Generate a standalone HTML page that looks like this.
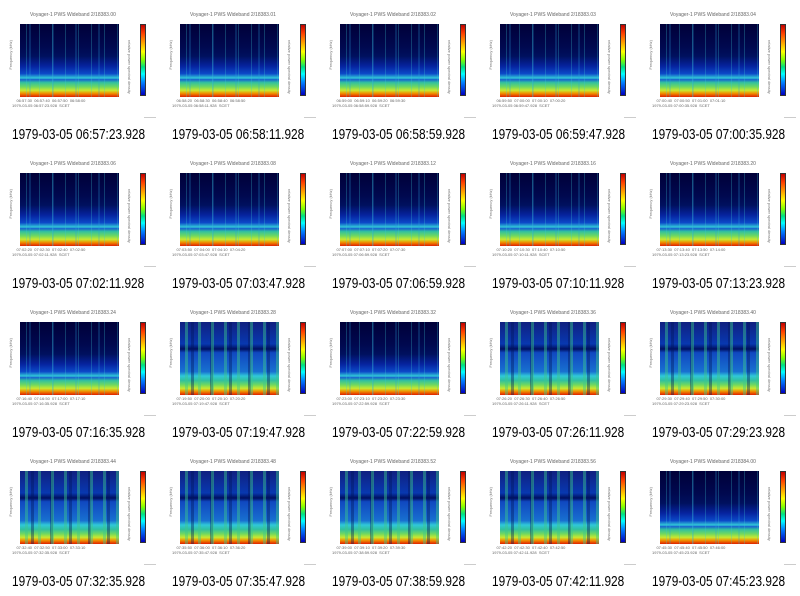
<!DOCTYPE html>
<html><head><meta charset="utf-8"><style>
*{margin:0;padding:0;box-sizing:border-box}
html,body{width:800px;height:596px;background:#fff;overflow:hidden;position:relative;font-family:"Liberation Sans",sans-serif}
.c{position:absolute;width:160px;height:149px;overflow:hidden}
.t{position:absolute;left:30px;top:12px;font-size:5px;color:#666;white-space:nowrap}
.p{position:absolute;left:20px;top:24px;width:99px;height:73px;
background:
repeating-linear-gradient(90deg,rgba(0,0,0,0) 0 6px,rgba(60,200,210,.28) 6px 7px,rgba(0,0,0,0) 7px 13px),
repeating-linear-gradient(90deg,rgba(0,0,0,0) 0 9px,rgba(40,160,220,.22) 9px 11px,rgba(0,0,0,0) 11px 23px),
linear-gradient(180deg,#000038 0%,#00084e 30%,#00105e 44%,#0624a0 58%,#0c48c8 68%,#30c8d8 74%,#1860d0 76%,#30c0a0 80%,#70d860 86%,#c8e830 91%,#f09000 95%,#e02000 100%)}
.p.b{background:
repeating-linear-gradient(90deg,rgba(0,0,0,0) 0 5px,rgba(60,200,140,.45) 5px 8px,rgba(0,0,0,0) 8px 13px),
repeating-linear-gradient(90deg,rgba(0,0,0,0) 0 11px,rgba(0,20,90,.4) 11px 14px,rgba(0,0,0,0) 14px 19px),
linear-gradient(180deg,#102080 0%,#0838b0 30%,#001060 37%,#1048c0 42%,#1870d0 68%,#30c8d8 74%,#30c0a0 80%,#70d860 86%,#c8e830 91%,#f09000 95%,#e02000 100%)}
.yl{position:absolute;left:8px;top:40px;font-size:4px;color:#777;writing-mode:vertical-rl;transform:rotate(180deg)}
.ax{position:absolute;left:12px;top:98px;font-size:4px;color:#666;white-space:nowrap;line-height:5px}
.cb{position:absolute;left:140px;top:24px;width:6px;height:72px;border:1px solid #333;
background:linear-gradient(180deg,#c00000,#ff4000 12%,#ffa000 25%,#ffff00 38%,#80ff00 50%,#00e080 60%,#00ffff 70%,#0080ff 82%,#0000c0 100%)}
.cl{position:absolute;left:127px;top:40px;font-size:4px;color:#777;writing-mode:vertical-rl}
.sm{position:absolute;left:144px;top:117px;width:12px;height:1px;background:#ccc}
.cap{position:absolute;left:12px;top:125px;font-size:15px;color:#000;white-space:nowrap;transform:scaleX(.79);transform-origin:0 0;line-height:20px}
</style></head><body>

<div class="c" style="left:0;top:0"><div class="t">Voyager-1 PWS Wideband 2/18383.00</div><div class="yl">Frequency (kHz)</div><div class="p"></div><div class="cl">relative power spectral density</div><div class="cb"></div><div class="ax">&nbsp;&nbsp;&nbsp;&nbsp;06:57:30 &nbsp;06:57:40 &nbsp;06:57:50 &nbsp;06:58:00<br>1979-03-05 06:57:23.928 &nbsp;SCET</div><div class="sm"></div><div class="cap">1979-03-05 06:57:23.928</div></div>
<div class="c" style="left:160px;top:0"><div class="t">Voyager-1 PWS Wideband 2/18383.01</div><div class="yl">Frequency (kHz)</div><div class="p"></div><div class="cl">relative power spectral density</div><div class="cb"></div><div class="ax">&nbsp;&nbsp;&nbsp;&nbsp;06:58:20 &nbsp;06:58:30 &nbsp;06:58:40 &nbsp;06:58:50<br>1979-03-05 06:58:11.928 &nbsp;SCET</div><div class="sm"></div><div class="cap">1979-03-05 06:58:11.928</div></div>
<div class="c" style="left:320px;top:0"><div class="t">Voyager-1 PWS Wideband 2/18383.02</div><div class="yl">Frequency (kHz)</div><div class="p"></div><div class="cl">relative power spectral density</div><div class="cb"></div><div class="ax">&nbsp;&nbsp;&nbsp;&nbsp;06:59:00 &nbsp;06:59:10 &nbsp;06:59:20 &nbsp;06:59:30<br>1979-03-05 06:58:59.928 &nbsp;SCET</div><div class="sm"></div><div class="cap">1979-03-05 06:58:59.928</div></div>
<div class="c" style="left:480px;top:0"><div class="t">Voyager-1 PWS Wideband 2/18383.03</div><div class="yl">Frequency (kHz)</div><div class="p"></div><div class="cl">relative power spectral density</div><div class="cb"></div><div class="ax">&nbsp;&nbsp;&nbsp;&nbsp;06:59:50 &nbsp;07:00:00 &nbsp;07:00:10 &nbsp;07:00:20<br>1979-03-05 06:59:47.928 &nbsp;SCET</div><div class="sm"></div><div class="cap">1979-03-05 06:59:47.928</div></div>
<div class="c" style="left:640px;top:0"><div class="t">Voyager-1 PWS Wideband 2/18383.04</div><div class="yl">Frequency (kHz)</div><div class="p"></div><div class="cl">relative power spectral density</div><div class="cb"></div><div class="ax">&nbsp;&nbsp;&nbsp;&nbsp;07:00:40 &nbsp;07:00:50 &nbsp;07:01:00 &nbsp;07:01:10<br>1979-03-05 07:00:35.928 &nbsp;SCET</div><div class="sm"></div><div class="cap">1979-03-05 07:00:35.928</div></div>

<div class="c" style="left:0;top:149px"><div class="t">Voyager-1 PWS Wideband 2/18383.06</div><div class="yl">Frequency (kHz)</div><div class="p"></div><div class="cl">relative power spectral density</div><div class="cb"></div><div class="ax">&nbsp;&nbsp;&nbsp;&nbsp;07:02:20 &nbsp;07:02:30 &nbsp;07:02:40 &nbsp;07:02:50<br>1979-03-05 07:02:11.928 &nbsp;SCET</div><div class="sm"></div><div class="cap">1979-03-05 07:02:11.928</div></div>
<div class="c" style="left:160px;top:149px"><div class="t">Voyager-1 PWS Wideband 2/18383.08</div><div class="yl">Frequency (kHz)</div><div class="p"></div><div class="cl">relative power spectral density</div><div class="cb"></div><div class="ax">&nbsp;&nbsp;&nbsp;&nbsp;07:03:50 &nbsp;07:04:00 &nbsp;07:04:10 &nbsp;07:04:20<br>1979-03-05 07:03:47.928 &nbsp;SCET</div><div class="sm"></div><div class="cap">1979-03-05 07:03:47.928</div></div>
<div class="c" style="left:320px;top:149px"><div class="t">Voyager-1 PWS Wideband 2/18383.12</div><div class="yl">Frequency (kHz)</div><div class="p"></div><div class="cl">relative power spectral density</div><div class="cb"></div><div class="ax">&nbsp;&nbsp;&nbsp;&nbsp;07:07:00 &nbsp;07:07:10 &nbsp;07:07:20 &nbsp;07:07:30<br>1979-03-05 07:06:59.928 &nbsp;SCET</div><div class="sm"></div><div class="cap">1979-03-05 07:06:59.928</div></div>
<div class="c" style="left:480px;top:149px"><div class="t">Voyager-1 PWS Wideband 2/18383.16</div><div class="yl">Frequency (kHz)</div><div class="p"></div><div class="cl">relative power spectral density</div><div class="cb"></div><div class="ax">&nbsp;&nbsp;&nbsp;&nbsp;07:10:20 &nbsp;07:10:30 &nbsp;07:10:40 &nbsp;07:10:50<br>1979-03-05 07:10:11.928 &nbsp;SCET</div><div class="sm"></div><div class="cap">1979-03-05 07:10:11.928</div></div>
<div class="c" style="left:640px;top:149px"><div class="t">Voyager-1 PWS Wideband 2/18383.20</div><div class="yl">Frequency (kHz)</div><div class="p"></div><div class="cl">relative power spectral density</div><div class="cb"></div><div class="ax">&nbsp;&nbsp;&nbsp;&nbsp;07:13:30 &nbsp;07:13:40 &nbsp;07:13:50 &nbsp;07:14:00<br>1979-03-05 07:13:23.928 &nbsp;SCET</div><div class="sm"></div><div class="cap">1979-03-05 07:13:23.928</div></div>

<div class="c" style="left:0;top:298px"><div class="t">Voyager-1 PWS Wideband 2/18383.24</div><div class="yl">Frequency (kHz)</div><div class="p"></div><div class="cl">relative power spectral density</div><div class="cb"></div><div class="ax">&nbsp;&nbsp;&nbsp;&nbsp;07:16:40 &nbsp;07:16:50 &nbsp;07:17:00 &nbsp;07:17:10<br>1979-03-05 07:16:35.928 &nbsp;SCET</div><div class="sm"></div><div class="cap">1979-03-05 07:16:35.928</div></div>
<div class="c" style="left:160px;top:298px"><div class="t">Voyager-1 PWS Wideband 2/18383.28</div><div class="yl">Frequency (kHz)</div><div class="p b"></div><div class="cl">relative power spectral density</div><div class="cb"></div><div class="ax">&nbsp;&nbsp;&nbsp;&nbsp;07:19:50 &nbsp;07:20:00 &nbsp;07:20:10 &nbsp;07:20:20<br>1979-03-05 07:19:47.928 &nbsp;SCET</div><div class="sm"></div><div class="cap">1979-03-05 07:19:47.928</div></div>
<div class="c" style="left:320px;top:298px"><div class="t">Voyager-1 PWS Wideband 2/18383.32</div><div class="yl">Frequency (kHz)</div><div class="p"></div><div class="cl">relative power spectral density</div><div class="cb"></div><div class="ax">&nbsp;&nbsp;&nbsp;&nbsp;07:23:00 &nbsp;07:23:10 &nbsp;07:23:20 &nbsp;07:23:30<br>1979-03-05 07:22:59.928 &nbsp;SCET</div><div class="sm"></div><div class="cap">1979-03-05 07:22:59.928</div></div>
<div class="c" style="left:480px;top:298px"><div class="t">Voyager-1 PWS Wideband 2/18383.36</div><div class="yl">Frequency (kHz)</div><div class="p b"></div><div class="cl">relative power spectral density</div><div class="cb"></div><div class="ax">&nbsp;&nbsp;&nbsp;&nbsp;07:26:20 &nbsp;07:26:30 &nbsp;07:26:40 &nbsp;07:26:50<br>1979-03-05 07:26:11.928 &nbsp;SCET</div><div class="sm"></div><div class="cap">1979-03-05 07:26:11.928</div></div>
<div class="c" style="left:640px;top:298px"><div class="t">Voyager-1 PWS Wideband 2/18383.40</div><div class="yl">Frequency (kHz)</div><div class="p b"></div><div class="cl">relative power spectral density</div><div class="cb"></div><div class="ax">&nbsp;&nbsp;&nbsp;&nbsp;07:29:30 &nbsp;07:29:40 &nbsp;07:29:50 &nbsp;07:30:00<br>1979-03-05 07:29:23.928 &nbsp;SCET</div><div class="sm"></div><div class="cap">1979-03-05 07:29:23.928</div></div>

<div class="c" style="left:0;top:447px"><div class="t">Voyager-1 PWS Wideband 2/18383.44</div><div class="yl">Frequency (kHz)</div><div class="p b"></div><div class="cl">relative power spectral density</div><div class="cb"></div><div class="ax">&nbsp;&nbsp;&nbsp;&nbsp;07:32:40 &nbsp;07:32:50 &nbsp;07:33:00 &nbsp;07:33:10<br>1979-03-05 07:32:35.928 &nbsp;SCET</div><div class="sm"></div><div class="cap">1979-03-05 07:32:35.928</div></div>
<div class="c" style="left:160px;top:447px"><div class="t">Voyager-1 PWS Wideband 2/18383.48</div><div class="yl">Frequency (kHz)</div><div class="p b"></div><div class="cl">relative power spectral density</div><div class="cb"></div><div class="ax">&nbsp;&nbsp;&nbsp;&nbsp;07:35:50 &nbsp;07:36:00 &nbsp;07:36:10 &nbsp;07:36:20<br>1979-03-05 07:35:47.928 &nbsp;SCET</div><div class="sm"></div><div class="cap">1979-03-05 07:35:47.928</div></div>
<div class="c" style="left:320px;top:447px"><div class="t">Voyager-1 PWS Wideband 2/18383.52</div><div class="yl">Frequency (kHz)</div><div class="p b"></div><div class="cl">relative power spectral density</div><div class="cb"></div><div class="ax">&nbsp;&nbsp;&nbsp;&nbsp;07:39:00 &nbsp;07:39:10 &nbsp;07:39:20 &nbsp;07:39:30<br>1979-03-05 07:38:59.928 &nbsp;SCET</div><div class="sm"></div><div class="cap">1979-03-05 07:38:59.928</div></div>
<div class="c" style="left:480px;top:447px"><div class="t">Voyager-1 PWS Wideband 2/18383.56</div><div class="yl">Frequency (kHz)</div><div class="p b"></div><div class="cl">relative power spectral density</div><div class="cb"></div><div class="ax">&nbsp;&nbsp;&nbsp;&nbsp;07:42:20 &nbsp;07:42:30 &nbsp;07:42:40 &nbsp;07:42:50<br>1979-03-05 07:42:11.928 &nbsp;SCET</div><div class="sm"></div><div class="cap">1979-03-05 07:42:11.928</div></div>
<div class="c" style="left:640px;top:447px"><div class="t">Voyager-1 PWS Wideband 2/18384.00</div><div class="yl">Frequency (kHz)</div><div class="p"></div><div class="cl">relative power spectral density</div><div class="cb"></div><div class="ax">&nbsp;&nbsp;&nbsp;&nbsp;07:45:30 &nbsp;07:45:40 &nbsp;07:45:50 &nbsp;07:46:00<br>1979-03-05 07:45:23.928 &nbsp;SCET</div><div class="sm"></div><div class="cap">1979-03-05 07:45:23.928</div></div>

</body></html>
